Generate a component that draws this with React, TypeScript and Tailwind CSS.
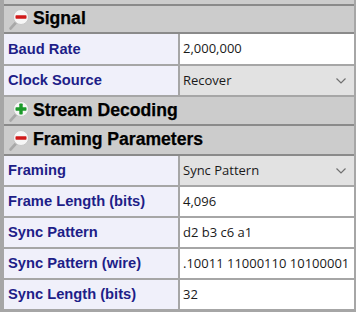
import React from 'react';

function GroupIcon({ open }: { open: boolean }) {
  return (
    <svg width="24" height="24" viewBox="0 0 24 24" className="shrink-0">
      <line x1="8" y1="15.5" x2="2.5" y2="21.5" stroke="#a8a8a8" strokeWidth="2.6" strokeLinecap="round" />
      <circle cx="13" cy="10" r="7.5" fill="#f6f6f6" stroke="#c8c8c8" strokeWidth="1" />
      {open ? (
        <rect x="7.5" y="8.3" width="11" height="3.4" rx="0.7" fill="#d11a1a" />
      ) : (
        <>
          <rect x="7.5" y="8.3" width="11" height="3.4" rx="0.7" fill="#1c9a2a" />
          <rect x="11.3" y="4.5" width="3.4" height="11" rx="0.7" fill="#1c9a2a" />
        </>
      )}
    </svg>
  );
}

function Header({ title, open, h }: { title: string; open: boolean; h: string }) {
  return (
    <div className={`flex items-center gap-[1px] bg-[#cccccc] pl-[4px] border-b-2 border-[#8a8a8a] ${h}`}>
      <GroupIcon open={open} />
      <span className="text-[17.6px] font-bold text-black leading-none [-webkit-text-stroke:0.25px_black]">{title}</span>
    </div>
  );
}

function Row({ label, value, select, h = 'h-[29px]' }: { label: string; value: string; select?: boolean; h?: string }) {
  return (
    <div className={`grid grid-cols-[174px_174px] gap-[2px] mb-[2px] ${h}`}>
      <div className="flex items-center bg-[#f0f0fa] pl-[4px]">
        <span className="text-[14.7px] font-bold text-[#1e1e88] leading-none whitespace-nowrap">{label}</span>
      </div>
      <div
        className={`flex items-center overflow-hidden ${select ? 'bg-[#e2e2e2] justify-between pl-[3px] pr-[8px]' : 'bg-white pl-[3px] pr-[4px]'}`}
        style={{ fontFamily: '"Open Sans", "Noto Sans", sans-serif' }}
      >
        <span className="text-[13px] text-[#1a1a1a] whitespace-nowrap">{value}</span>
        {select && (
          <svg width="10" height="6" viewBox="0 0 10 6">
            <polyline points="0.5,0.5 5,5 9.5,0.5" fill="none" stroke="#707070" strokeWidth="1.2" />
          </svg>
        )}
      </div>
    </div>
  );
}

export default function App() {
  return (
    <div className="w-[360px] h-[312px] bg-white overflow-hidden" style={{ fontFamily: '"Liberation Sans", Arial, sans-serif' }}>
      <div className="w-[356px] h-[312px] bg-[#a6a6a6] pl-[4px] pr-[2px] flex flex-col">
        <div className="h-[6px] shrink-0 bg-[#cccccc] border-b-2 border-[#8a8a8a]" />
        <Header title="Signal" open h="h-[28px]" />
        <Row label="Baud Rate" value="2,000,000" h="h-[30px]" />
        <Row label="Clock Source" value="Recover" select />
        <Header title="Stream Decoding" open={false} h="h-[29px]" />
        <Header title="Framing Parameters" open h="h-[30px]" />
        <Row label="Framing" value="Sync Pattern" select />
        <Row label="Frame Length (bits)" value="4,096" />
        <Row label="Sync Pattern" value="d2 b3 c6 a1" />
        <Row label="Sync Pattern (wire)" value=".10011 11000110 10100001" />
        <Row label="Sync Length (bits)" value="32" />
      </div>
    </div>
  );
}
